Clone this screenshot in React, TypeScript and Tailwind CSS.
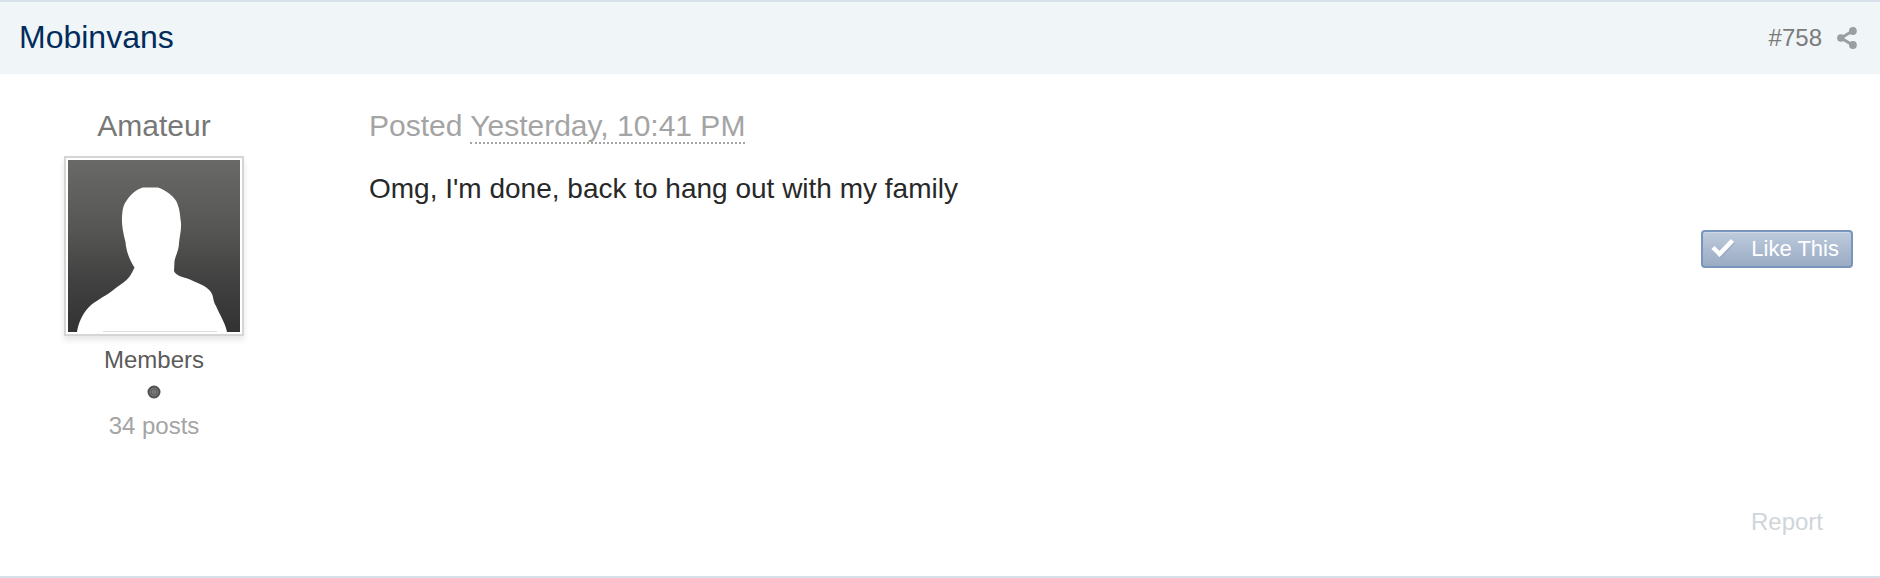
const post = {
  author: "Mobinvans",
  number: 758,
  title: "Amateur",
  group: "Members",
  posts: 34,
  date: "Yesterday, 10:41 PM",
  body: "Omg, I'm done, back to hang out with my family",
};

function ShareIcon() {
  return (
    <svg width="20" height="22" viewBox="0 0 20 22" aria-hidden="true">
      <path d="M16 3.8 L4 11 L16 18.2" fill="none" stroke="#999fa2" strokeWidth="3" />
      <circle cx="3.8" cy="11" r="3.7" fill="#999fa2" />
      <circle cx="15.9" cy="4" r="3.9" fill="#999fa2" />
      <circle cx="15.9" cy="18" r="3.9" fill="#999fa2" />
    </svg>
  );
}

function Avatar() {
  return (
    <a
      href="#profile"
      aria-label={post.author}
      className="mt-2.5 block border-2 border-[#d5d5d5] bg-white p-0.5 shadow-[0_4px_6px_rgba(0,0,0,0.1)]"
    >
      <svg width="172" height="172" viewBox="0 0 172 172" className="block">
        <defs>
          <linearGradient id="avatar-bg" x1="0" y1="0" x2="0" y2="1">
            <stop offset="0" stopColor="#696967" />
            <stop offset="0.4" stopColor="#565654" />
            <stop offset="0.7" stopColor="#414141" />
            <stop offset="1" stopColor="#323232" />
          </linearGradient>
        </defs>
        <rect width="172" height="172" fill="url(#avatar-bg)" />
        <path
          d="M9 172 C10 164 14 154 21 147 C27 141 36 137 44 131 C51 125 58 122 62 116 Q64.5 112 66.5 107.5 C61 99 58 90 57.5 82 C55 73 53.5 64 54 57 C54.500 50 55 45 59 40 C63 34 69 29 75 27.5 L90 27.5 C97 30 107 36 109.5 44 C112 50 112 56 113 63 C113.500 70 111.500 77 111 83 C111 90 108 94 106.500 101 L106 111 C108 116 115 117 122 119.500 C132 124 141 127 144 134 C145.500 137 145 141 148 146 C152 155 158 165 159 172 Z"
          fill="#fff"
        />
        <path d="M35 171.5 H149" stroke="#dedede" />
      </svg>
    </a>
  );
}

function LikeButton() {
  return (
    <button
      type="button"
      className="flex h-[38px] items-center gap-4 rounded-[4px] border-2 border-[#7995bb] bg-linear-to-b from-[#becbdd] to-[#9aabc3] pr-3 pl-2 text-[22px] leading-8 text-white shadow-[inset_0_1px_0_#cfd9e6]"
    >
      <svg width="24" height="22" viewBox="0 0 24 22" aria-hidden="true">
        <path d="M3 11.5 L9.500 18 L22.500 4" fill="none" stroke="#8095b1" strokeOpacity="0.35" strokeWidth="4" />
        <path d="M2 9.5 L8.500 16 L21.500 2.500" fill="none" stroke="#fff" strokeWidth="4.5" />
      </svg>
      Like This
    </button>
  );
}

export default function App() {
  return (
    <article className="border-y-2 border-[#d5e0ea] bg-white font-['Liberation_Sans',Arial,sans-serif] text-[#282828]">
      <header className="flex h-[72px] items-center justify-between bg-[#f0f5f8] pr-[23px] pl-[19px]">
        <h3 className="pb-0.5 text-[32px] leading-10 text-[#022c5c]">
          <a href="#profile">{post.author}</a>
        </h3>
        <div className="flex items-center gap-[15px] text-2xl text-[#7b7b7b]">
          <a href="#post">#{post.number}</a>
          <a href="#share" aria-label="Share">
            <ShareIcon />
          </a>
        </div>
      </header>

      <div className="flex gap-[61px] pt-8 pb-[38px]">
        <aside className="flex w-[308px] shrink-0 flex-col items-center text-2xl">
          <p className="text-[30px] leading-10 text-[#777]">{post.title}</p>
          <Avatar />
          <p className="mt-2 text-[#5a5a5a]">{post.group}</p>
          <div className="flex h-8 items-center">
            <svg width="14" height="14" viewBox="0 0 14 14" aria-hidden="true">
              <circle cx="7" cy="7" r="5.5" fill="#777" stroke="#505050" strokeWidth="2" />
              <circle cx="7" cy="7" r="3" fill="none" stroke="#5c5c5c" />
            </svg>
          </div>
          <p className="mt-0.5 text-[#a4a4a4]">{post.posts} posts</p>
        </aside>

        <div className="flex grow flex-col">
          <p className="text-[30px] leading-10 text-[#a4a4a4]">
            Posted{" "}
            <abbr className="border-b-2 border-dotted border-[#a4a4a4] no-underline">{post.date}</abbr>
          </p>
          <p className="mt-[23px] text-[28px] leading-10">{post.body}</p>
          <div className="mt-[21px] flex justify-end pr-[27px]">
            <LikeButton />
          </div>
          <div className="mt-[238px] flex justify-end pr-[57px] text-2xl">
            <a href="#report" className="text-[#d0d5d9]">
              Report
            </a>
          </div>
        </div>
      </div>
    </article>
  );
}
